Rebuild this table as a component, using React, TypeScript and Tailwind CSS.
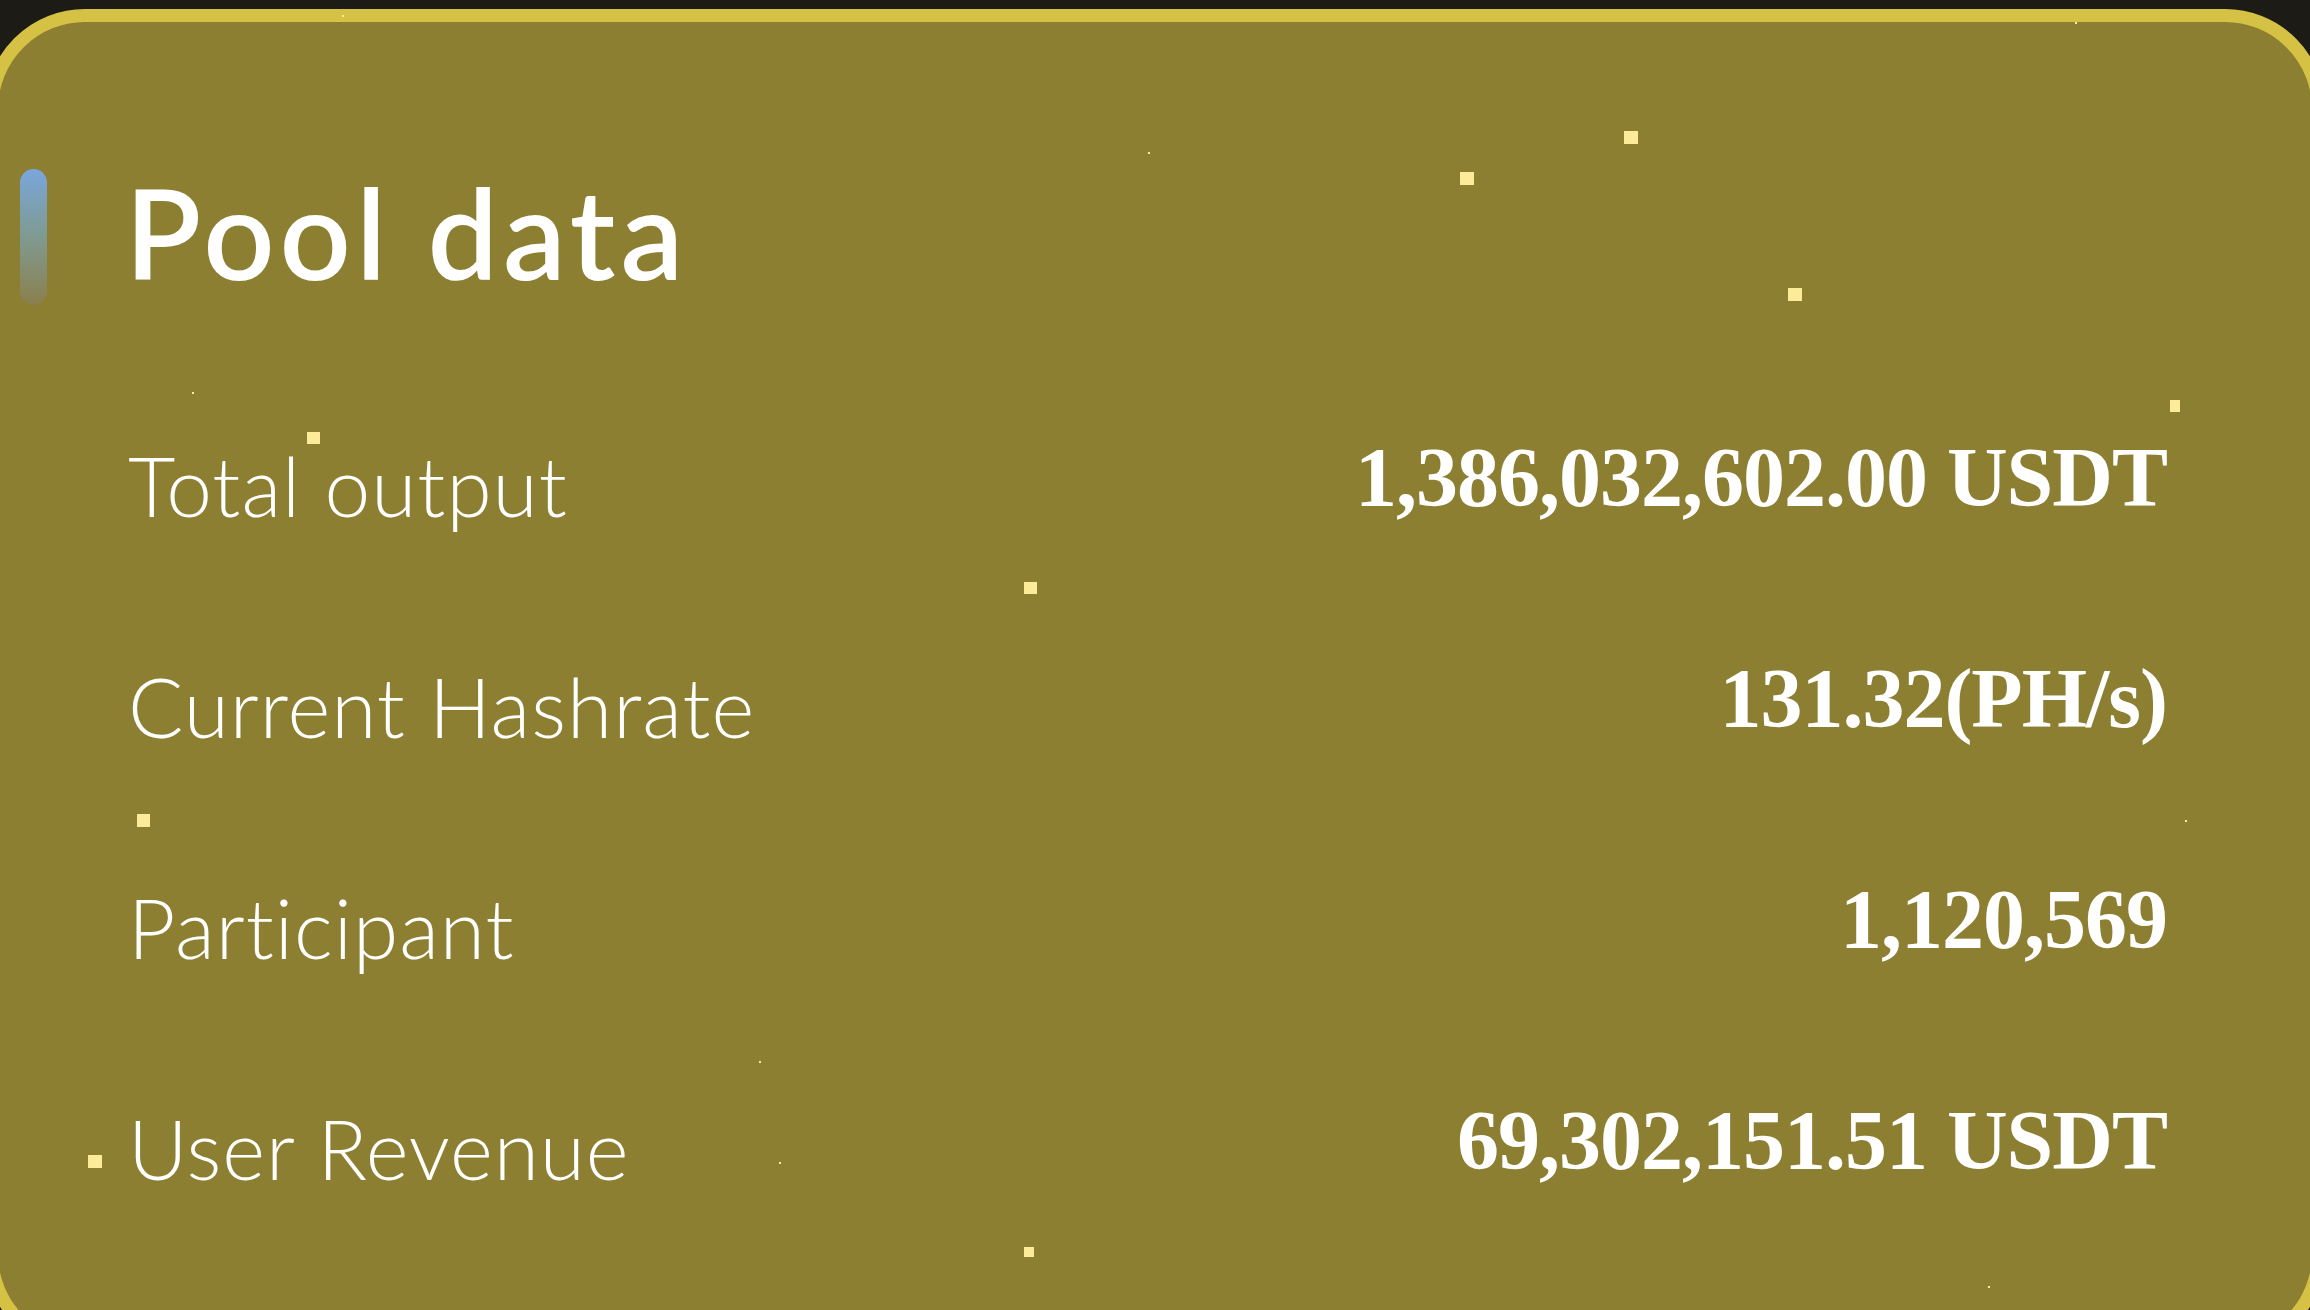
import React from "react";

const dots: { x: number; y: number; w: number; h: number }[] = [
  { x: 1624, y: 131, w: 14, h: 13 },
  { x: 1460, y: 172, w: 14, h: 13 },
  { x: 1788, y: 288, w: 14, h: 13 },
  { x: 2170, y: 400, w: 10, h: 12 },
  { x: 307, y: 432, w: 13, h: 12 },
  { x: 1024, y: 582, w: 13, h: 12 },
  { x: 137, y: 814, w: 13, h: 13 },
  { x: 88, y: 1155, w: 14, h: 13 },
  { x: 1024, y: 1247, w: 10, h: 10 },
  { x: 1148, y: 152, w: 2, h: 2 },
  { x: 192, y: 392, w: 2, h: 2 },
  { x: 2075, y: 22, w: 2, h: 2 },
  { x: 342, y: 15, w: 2, h: 2 },
  { x: 2185, y: 820, w: 2, h: 2 },
  { x: 759, y: 1061, w: 2, h: 2 },
  { x: 779, y: 1162, w: 2, h: 2 },
  { x: 1988, y: 1286, w: 2, h: 2 },
];

const rows = [
  { label: "Total output", value: "1,386,032,602.00 USDT" },
  { label: "Current Hashrate", value: "131.32(PH/s)" },
  { label: "Participant", value: "1,120,569" },
  { label: "User Revenue", value: "69,302,151.51 USDT" },
];

export default function App() {
  return (
    <div className="relative w-[2310px] h-[1310px] overflow-hidden bg-[#1c1b15]">
      <div className="ml-[-15px] mt-[9px] w-[2340px] h-[1345px] rounded-[100px] border-[13px] border-[#d5c244] bg-[#8d7f31]">
        <div className="mt-[147px] flex h-[136px] items-center">
          <div className="ml-[22px] h-[136px] w-[27px] rounded-full bg-gradient-to-b from-[#7aa6dc] via-[#7f9a90] to-[#8a7f4c]" />
          <h1 className="ml-[78px] -mt-[10px] text-[125px] font-semibold leading-none tracking-[5px] text-white [font-family:Lato,'Open_Sans',sans-serif]">
            Pool data
          </h1>
        </div>
        <div className="mt-[69px] flex flex-col pl-[130px] pr-[145px]">
          {rows.map((r) => (
            <div key={r.label} className="flex h-[221px] items-center justify-between">
              <span className="text-[82px] font-light leading-none tracking-[1px] text-white [font-family:Lato,sans-serif]">
                {r.label}
              </span>
              <span className="-mt-[14px] text-[84px] font-bold leading-none tracking-[-1px] text-white [font-family:'Liberation_Serif','Times_New_Roman',serif]">
                {r.value}
              </span>
            </div>
          ))}
        </div>
      </div>
      {dots.map((d, i) => (
        <div
          key={i}
          className="absolute bg-[#fcec9a]"
          style={{ left: d.x, top: d.y, width: d.w, height: d.h }}
        />
      ))}
    </div>
  );
}
